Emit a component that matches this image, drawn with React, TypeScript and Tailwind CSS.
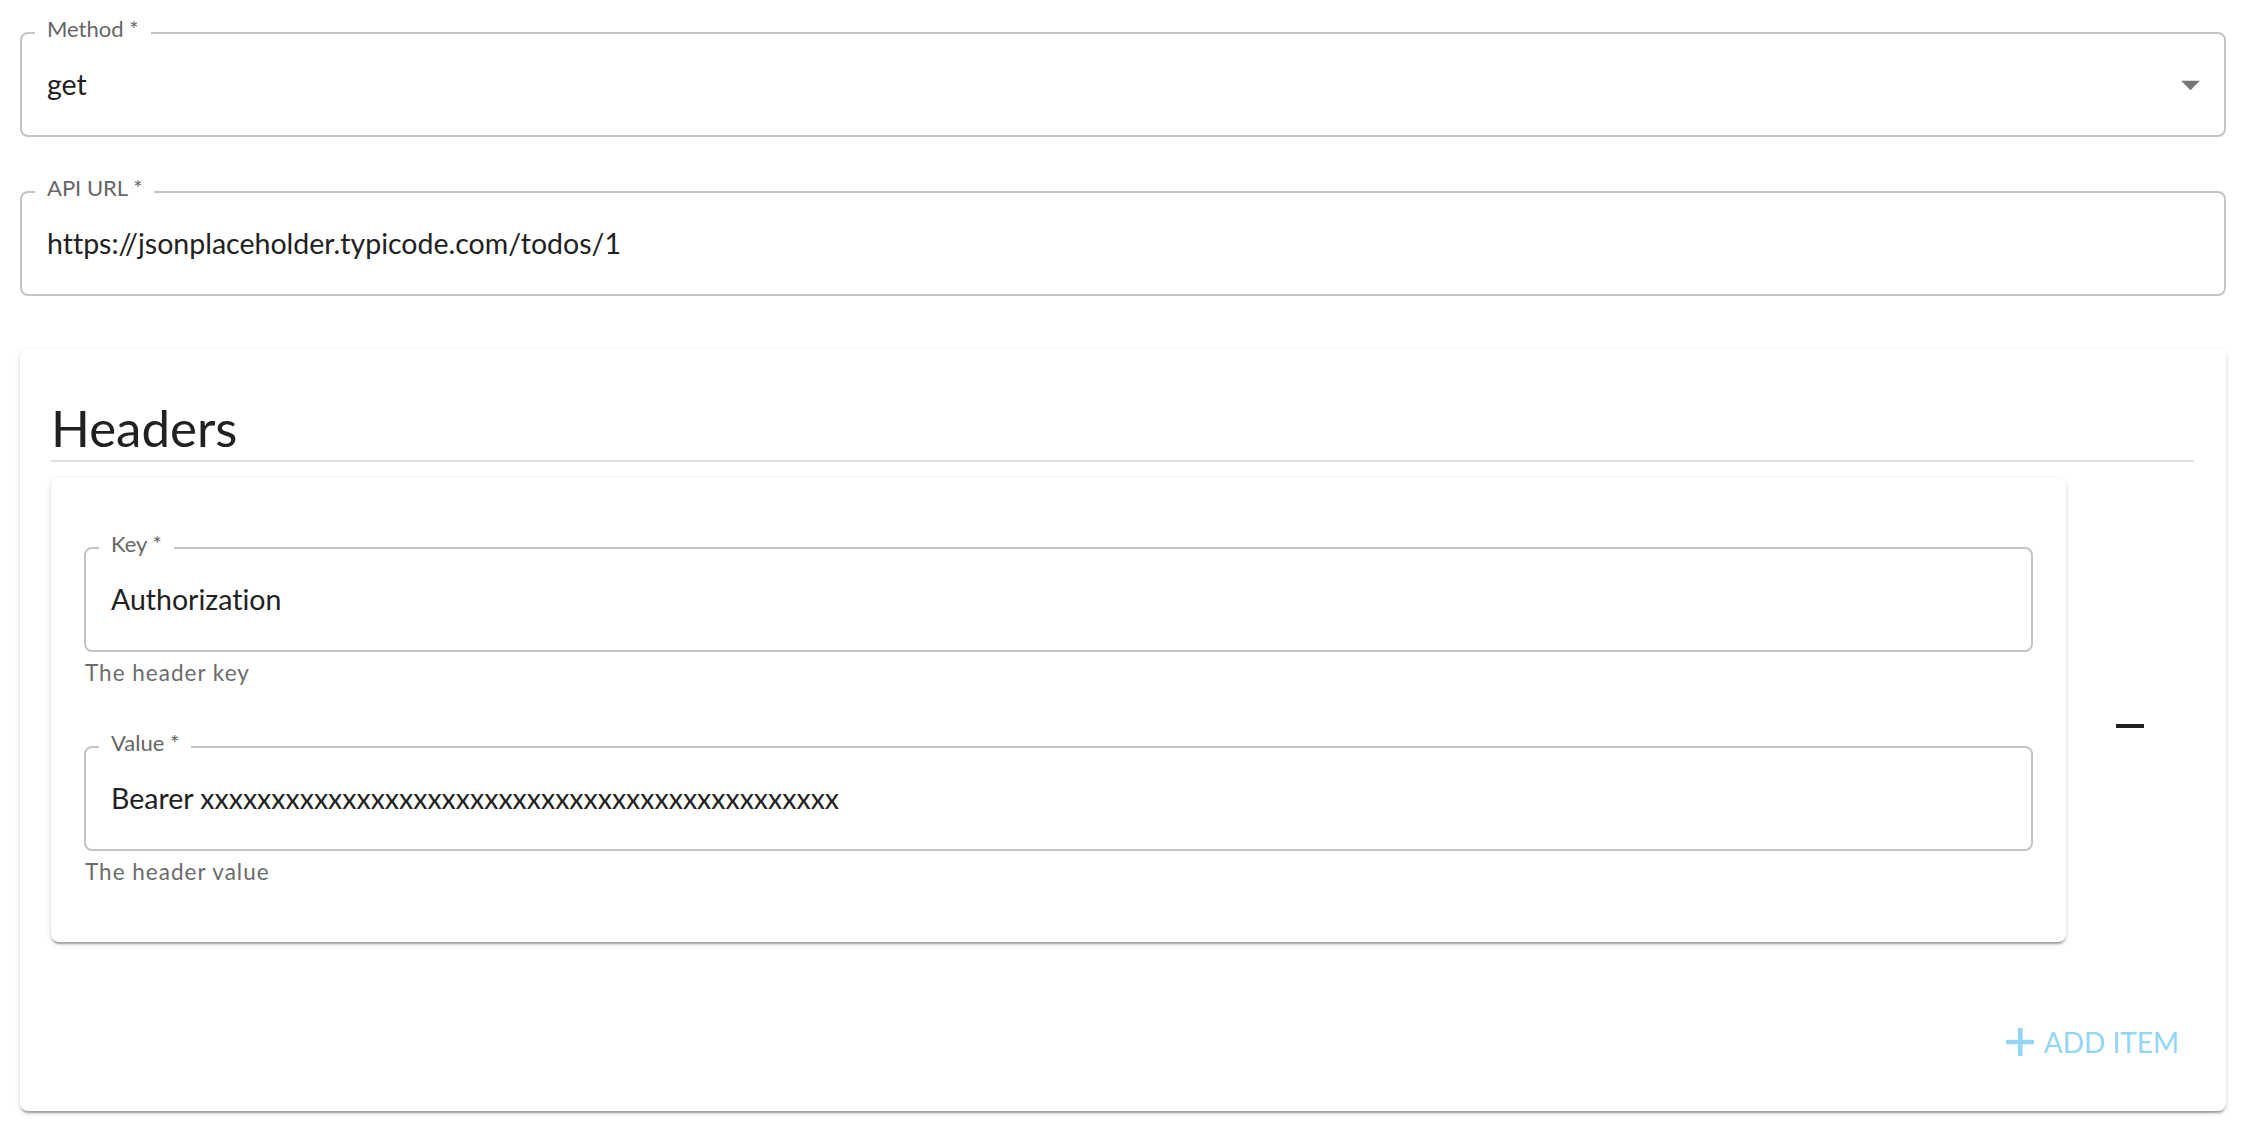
import type { ReactNode } from "react";

const font = { fontFamily: "Lato, 'Open Sans', sans-serif" };

function OutlinedField({ label, value, adornment }: { label: string; value: string; adornment?: ReactNode }) {
  return (
    <div className="relative flex h-[105px] items-center rounded-[8px] border-2 border-[#c4c4c4] pl-[25px] pr-[11px]">
      <span className="absolute left-[13px] top-[-16px] bg-white px-[12px] text-[22px] leading-none text-[#666666]">
        {label}
      </span>
      <span className="flex-1 text-[28.5px] leading-[1.2] text-[#212121]">{value}</span>
      {adornment}
    </div>
  );
}

function ArrowDropDown() {
  return (
    <svg viewBox="0 0 24 24" className="size-[45px] fill-[#757575]">
      <path d="M7 10l5 5 5-5z" />
    </svg>
  );
}

function HeaderField({ label, value, helper, className }: { label: string; value: string; helper: string; className?: string }) {
  return (
    <div className={className}>
      <OutlinedField label={label} value={value} />
      <p className="ml-[1px] mt-[2px] text-[22.5px] leading-[37px] tracking-[1px] text-[#6b6b6b]">{helper}</p>
    </div>
  );
}

export default function App() {
  const token = "Bearer " + "x".repeat(45);

  return (
    <div
      className="min-h-screen bg-white pb-[27px] pl-[20px] pr-[34px] pt-[32px] [font-variant-ligatures:none]"
      style={font}
    >
      <OutlinedField label="Method *" value="get" adornment={<ArrowDropDown />} />
      <div className="mt-[54px]">
        <OutlinedField label="API URL *" value="https://jsonplaceholder.typicode.com/todos/1" />
      </div>

      <section className="mt-[53px] rounded-[8px] bg-white pb-[35px] pl-[31px] pr-[32px] pt-[46px] shadow-[0_4px_2px_-2px_rgba(0,0,0,0.2),0_2px_2px_0_rgba(0,0,0,0.14),0_2px_6px_0_rgba(0,0,0,0.12)]">
        <h2 className="text-[51px] font-normal leading-[65px] text-[#212121]">Headers</h2>
        <div className="h-[2px] bg-[#e0e0e0]" />

        <div className="mt-[16px] flex">
          <div className="flex-1 rounded-[8px] bg-white px-[33px] pb-[52px] pt-[69px] shadow-[0_4px_2px_-2px_rgba(0,0,0,0.2),0_2px_2px_0_rgba(0,0,0,0.14),0_2px_6px_0_rgba(0,0,0,0.12)]">
            <HeaderField label="Key *" value="Authorization" helper="The header key" />
            <HeaderField className="mt-[55px]" label="Value *" value={token} helper="The header value" />
          </div>
          <div className="flex w-[128px] items-center justify-center pt-[31px]">
            <button className="flex size-[75px] items-center justify-center rounded-full">
              <svg viewBox="0 0 24 24" className="size-[48px] fill-[#212121]">
                <path d="M19 13H5v-2h14v2z" />
              </svg>
            </button>
          </div>
        </div>

        <div className="mt-[66px] flex justify-end">
          <button className="flex h-[68px] items-center gap-[10px] px-[15px] text-[28px] uppercase leading-none text-[#93d5f4]">
            <svg viewBox="0 0 14 14" className="size-[28px] fill-[#93d5f4]">
              <path d="M6 0h2.3v14H6zM0 5.85h14v2.3H0z" />
            </svg>
            Add item
          </button>
        </div>
      </section>
    </div>
  );
}
